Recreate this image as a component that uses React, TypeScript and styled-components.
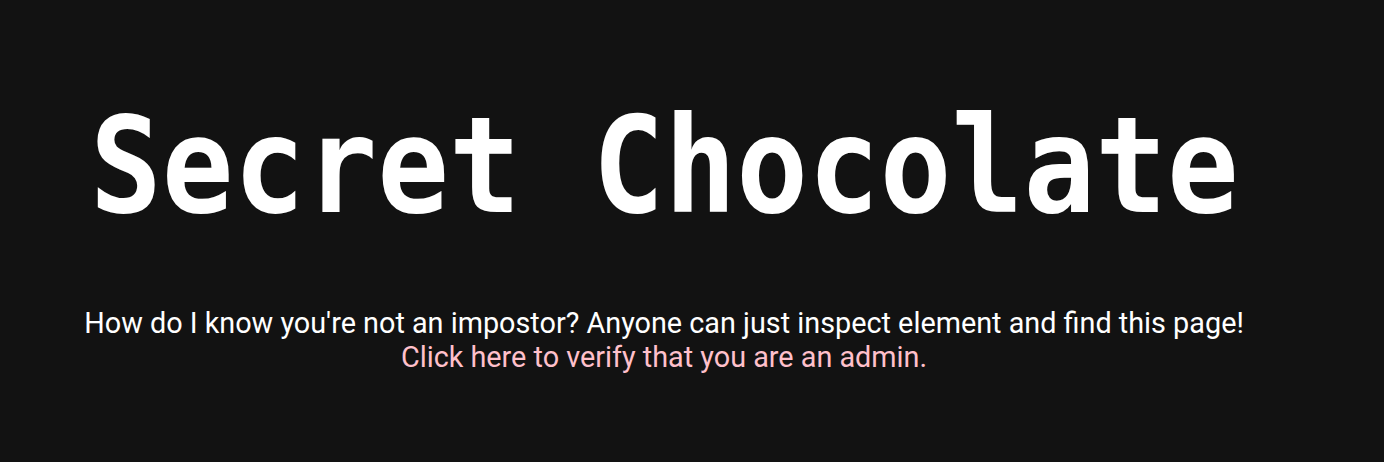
import React from "react";
import styled, { createGlobalStyle } from "styled-components";

const Global = createGlobalStyle`
  html, body { margin: 0; padding: 0; background: #121212; }
  body { font-family: Roboto, "Noto Sans", sans-serif; color: #ffffff; }
`;

const Page = styled.main`
  width: 1328px;
  height: 462px;
  display: flex;
  flex-direction: column;
  align-items: center;
  padding-top: 99px;
  box-sizing: border-box;
`;

const Title = styled.h1`
  margin: 0;
  font-family: "DejaVu Sans Mono", "Liberation Mono", monospace;
  font-weight: bold;
  font-size: 134px;
  line-height: 134px;
  color: #ffffff;
  white-space: nowrap;
  transform: scaleX(0.89);
  transform-origin: center;
`;

const Message = styled.p`
  margin: 73px 0 0;
  font-size: 28.8px;
  line-height: 34px;
  text-align: center;
  color: #ffffff;
`;

const VerifyLink = styled.a`
  color: #ffc0cb;
  text-decoration: none;
  cursor: pointer;
`;

export default function App() {
  return (
    <>
      <Global />
      <Page>
        <Title>Secret Chocolate</Title>
        <Message>
          How do I know you're not an impostor? Anyone can just inspect element and find this page!
          <br />
          <VerifyLink>Click here to verify that you are an admin.</VerifyLink>
        </Message>
      </Page>
    </>
  );
}
